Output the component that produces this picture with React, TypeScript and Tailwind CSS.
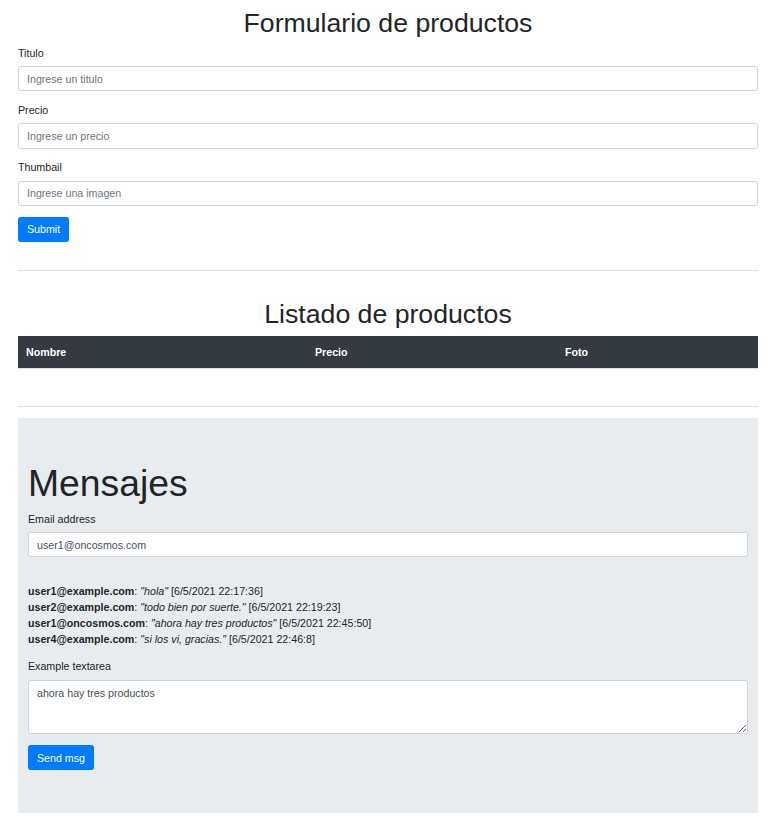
import React from "react";

type Msg = {
  email: string;
  text: string;
  date: string;
};

const messages: Msg[] = [
  { email: "user1@example.com", text: "hola", date: "6/5/2021 22:17:36" },
  { email: "user2@example.com", text: "todo bien por suerte.", date: "6/5/2021 22:19:23" },
  { email: "user1@oncosmos.com", text: "ahora hay tres productos", date: "6/5/2021 22:45:50" },
  { email: "user4@example.com", text: "si los vi, gracias.", date: "6/5/2021 22:46:8" },
];

const inputCls =
  "block w-full h-[25.33px] px-[8px] py-[4px] text-[10.67px] leading-[16px] text-[#495057] bg-white border border-[#ced4da] rounded-[2.67px] placeholder:text-[#6c757d] outline-none";

const btnCls =
  "h-[25.33px] px-[9px] bg-[#007bff] text-white rounded-[2.67px] leading-[16px] text-[10.67px]";

const Field = ({ label, placeholder }: { label: string; placeholder: string }) => (
  <div className="mb-[10.67px]">
    <label className="block mb-[5.33px] leading-[16px]">{label}</label>
    <input type="text" placeholder={placeholder} className={inputCls} />
  </div>
);

export default function App() {
  return (
    <div
      className="bg-white text-[#212529] text-[10.67px] leading-[16px] min-h-[831px]"
      style={{ fontFamily: '"Liberation Sans", Arial, sans-serif' }}
    >
      <div className="w-[740px] ml-[18px] pt-[7.33px]">
        <h1 className="text-center text-[26.67px] leading-[32px] font-normal mb-[5.33px]">
          Formulario de productos
        </h1>
        <form onSubmit={(e) => e.preventDefault()}>
          <Field label="Titulo" placeholder="Ingrese un titulo" />
          <Field label="Precio" placeholder="Ingrese un precio" />
          <Field label="Thumbail" placeholder="Ingrese una imagen" />
          <button type="submit" className={btnCls}>
            Submit
          </button>
        </form>

        <hr className="mt-[27.67px] mb-[27.67px] border-0 border-t border-[rgba(0,0,0,0.1)]" />

        <h1 className="text-center text-[26.67px] leading-[32px] font-normal mb-[5.33px]">
          Listado de productos
        </h1>
        <table className="w-full border-collapse">
          <thead>
            <tr className="bg-[#343a40] text-white">
              <th className="w-[289px] text-left font-bold p-[8px] leading-[16px] border-b border-[#dee2e6]">
                Nombre
              </th>
              <th className="w-[250px] text-left font-bold p-[8px] leading-[16px] border-b border-[#dee2e6]">
                Precio
              </th>
              <th className="text-left font-bold p-[8px] leading-[16px] border-b border-[#dee2e6]">Foto</th>
            </tr>
          </thead>
          <tbody></tbody>
        </table>

        <hr className="mt-[37.67px] mb-[10.67px] border-0 border-t border-[rgba(0,0,0,0.1)]" />

        <div className="bg-[#e9ecef] pt-[42.67px] pb-[42.67px] px-[10px]">
          <h1 className="text-[37.33px] leading-[44.8px] font-light mb-[5.33px]">Mensajes</h1>
          <div className="mb-[10.67px]">
            <label className="block mb-[5.33px] leading-[16px]">Email address</label>
            <input type="email" defaultValue="user1@oncosmos.com" className={inputCls} />
          </div>
          <div className="pt-[15.5px] mb-[10.67px]">
            {messages.map((m, i) => (
              <div key={i} className="leading-[16px]">
                <b>{m.email}</b>: <i>"{m.text}"</i> [{m.date}]
              </div>
            ))}
          </div>
          <div className="mb-[10.67px]">
            <label className="block mb-[6.33px] leading-[16px]">Example textarea</label>
            <textarea
              defaultValue="ahora hay tres productos"
              className="block w-full h-[54px] px-[8px] py-[4px] text-[10.67px] leading-[16px] text-[#495057] bg-white border border-[#ced4da] rounded-[2.67px] outline-none"
            />
          </div>
          <button type="button" className={btnCls}>
            Send msg
          </button>
        </div>
      </div>
    </div>
  );
}
